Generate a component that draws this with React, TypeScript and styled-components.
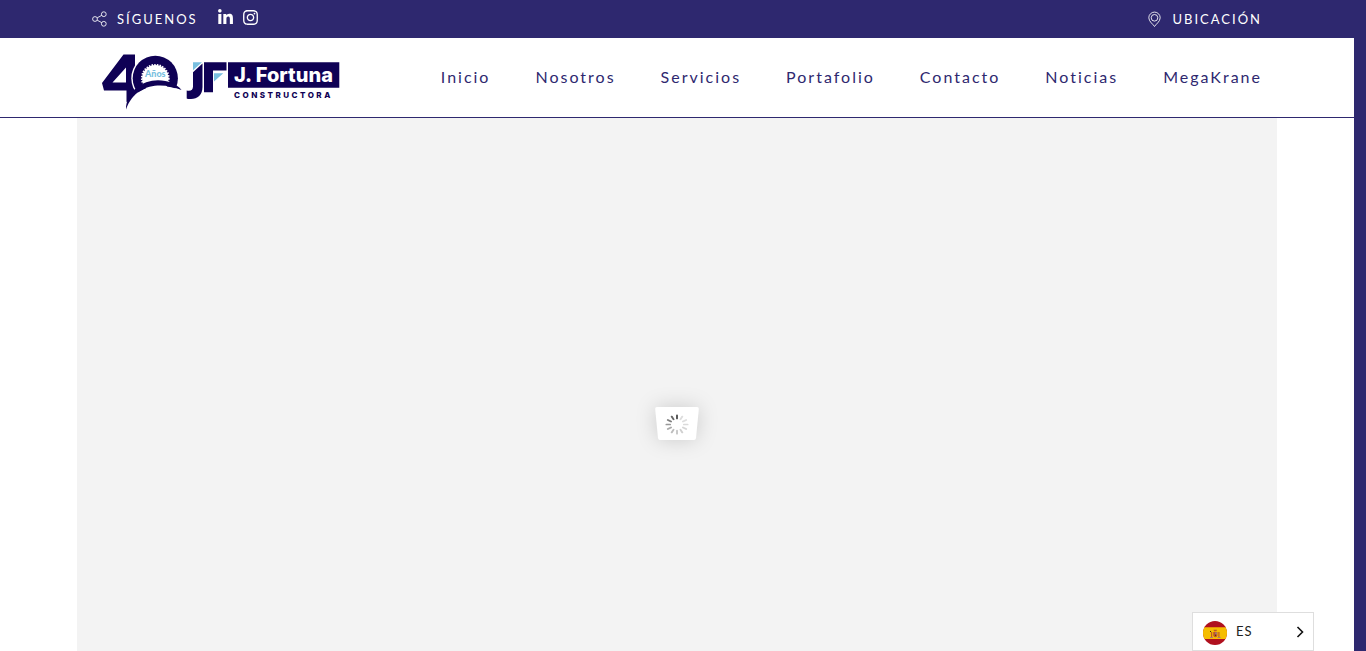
import React from "react";
import styled, { createGlobalStyle, css } from "styled-components";
import { FaLinkedinIn, FaInstagram } from "react-icons/fa";

const navy = "#2e286f";
const ink = "#0f0155";
const sky = "#79bfdf";

const GlobalStyle = createGlobalStyle`
  * { box-sizing: border-box; }
  html { background: ${navy}; }
  body { margin: 0; font-family: Lato, "Liberation Sans", sans-serif; }
`;

const Page = styled.div`
  display: flex;
  flex-direction: column;
  min-height: 100vh;
  margin-right: 12px;
  background: #fff;
`;

const container = css`
  width: 100%;
  max-width: 1200px;
  margin: 0 auto;
`;

const TopBar = styled.div`
  background: ${navy};
`;

const TopInner = styled.div`
  ${container}
  display: flex;
  align-items: center;
  justify-content: space-between;
  height: 38px;
  padding: 0 15px;
`;

const Group = styled.div`
  display: flex;
  align-items: center;
`;

const TopLabel = styled.span`
  display: flex;
  align-items: center;
  gap: 10px;
  color: #fff;
  font-size: 13px;
  line-height: 20px;
  letter-spacing: 2px;
  text-transform: uppercase;
`;

const TopLink = styled(TopLabel).attrs({ as: "a" })<{ href: string }>`
  text-decoration: none;
`;

const Socials = styled.div`
  display: flex;
  gap: 8px;
  margin-left: 19px;
  padding-bottom: 3px;
`;

const SocialLink = styled.a`
  display: flex;
  color: #fff;
`;

const Header = styled.header`
  border-bottom: 1px solid ${navy};
`;

const HeaderInner = styled.div`
  ${container}
  display: flex;
  align-items: center;
  justify-content: space-between;
  height: 79px;
  padding: 0 15px 0 23px;
`;

const LogoLink = styled.a`
  display: flex;
  padding-top: 6px;
`;

const Nav = styled.nav`
  display: flex;
  gap: 45px;
  padding-bottom: 2px;
`;

const NavLink = styled.a`
  color: ${navy};
  font-size: 16px;
  line-height: 24px;
  letter-spacing: 2px;
  text-decoration: none;
`;

const Hero = styled.main`
  ${container}
  display: flex;
  flex: 1;
  align-items: center;
  justify-content: center;
  padding-top: 78px;
  background: #f3f3f3;
`;

const LoaderCard = styled.div`
  display: flex;
  filter: drop-shadow(0 0 10px rgba(0, 0, 0, 0.16));
`;

const Language = styled.button`
  position: fixed;
  right: 52px;
  bottom: 0;
  display: flex;
  align-items: center;
  width: 122px;
  height: 39px;
  padding: 2px 9px 0 10px;
  border: 1px solid #dedede;
  border-radius: 0;
  background: #fff;
  color: #222;
  font-family: inherit;
  font-size: 13px;
  letter-spacing: 1px;
  cursor: pointer;
`;

const LanguageCode = styled.span`
  flex: 1;
  padding: 0 0 3px 9px;
  text-align: left;
`;

const ShareIcon = () => (
  <svg width="15" height="16" viewBox="0 0 15 16" fill="none" stroke="#fff" strokeOpacity="0.85" aria-hidden="true">
    <circle cx="3" cy="8" r="2.4" />
    <circle cx="11.8" cy="3.2" r="2.4" />
    <circle cx="11.8" cy="12.8" r="2.4" />
    <path d="M5.2 6.8 9.7 4.4M5.2 9.2l4.5 2.4" />
  </svg>
);

const PinIcon = () => (
  <svg width="14" height="16" viewBox="0 0 14 16" fill="none" stroke="#fff" strokeOpacity="0.85" aria-hidden="true">
    <path d="M6.500 15.500C5.500 13.500 .8 10.700 .8 6.800a5.700 5.700 0 0 1 11.400 0c0 3.900-4.700 6.700-5.700 8.700Z" />
    <circle cx="6.500" cy="6.800" r="3.300" />
  </svg>
);

const Logo = () => (
  <svg width="240" height="60" viewBox="100 51 240 60" role="img" aria-label="40 Años J. Fortuna Constructora">
    <path fill={ink} fillRule="evenodd" d="M123.500 54.500H135V99l-8.500 3V90.500H104L102 83ZM126 67.500 112.500 82.500H126Z" />
    <circle cx="155.300" cy="78.300" r="24" fill="#fff" />
    <circle cx="155.300" cy="78.300" r="22.600" fill={ink} />
    <circle cx="155.300" cy="78.300" r="13.200" fill="#fff" />
    <circle cx="155.300" cy="78.300" r="13.500" fill="none" stroke="#fff" strokeWidth="1.800" strokeDasharray="1.500 1.200" />
    <path fill="#fff" d="M131 98Q150 79 181 90V111H127V104Z" />
    <path fill={ink} d="M126 109.500C126 92 142 80.300 158 80.300C168 80.300 177 84 181.500 90C162 81.500 135 83 126 109.500Z" />
    <text x="145" y="77" fill={sky} fontFamily="Lato" fontWeight="900" fontSize="9">Años</text>
    <path fill={sky} d="M193 62.300h9L193 70.300ZM214 73.200h9.300l-9.300 8.300Z" />
    <path fill={ink} d="M202.500 63.500V87c0 8-5 12-11.500 12-2 0-4-.4-4.300-.6V90.500c4 1 6.300-.5 6.300-4V72.300ZM204 62.300h22.500V70.500H213V92.300h-9Z" />
    <path fill={ink} d="M228 62.300h111.300v25.400H228Z" />
    <text x="234" y="82" fill="#fff" fontFamily="Inter" fontWeight="800" fontSize="20">J. Fortuna</text>
    <text x="234" y="98" fill={ink} fontFamily="Inter" fontWeight="800" fontSize="8" letterSpacing="2.500">CONSTRUCTORA</text>
  </svg>
);

const spokeColours = ["#555", "#ddd", "#dedede", "#dadada", "#d6d6d6", "#d0d0d0", "#c8c8c8", "#bdbdbd", "#aaa", "#999", "#808080", "#686868"];

const Loader = () => (
  <svg width="44" height="34" viewBox="0 0 44 34" role="img" aria-label="Cargando">
    <path d="M2 0H42q2 0 1.800 2L41 31q-.3 2-2 2H5q-1.700 0-2-2L.2 2Q0 0 2 0Z" fill="#fff" />
    <g transform="translate(22 17.500) scale(1.150 1)">
      {spokeColours.map((colour, i) => (
        <path key={i} d="M0-9.200V-6" stroke={colour} strokeWidth="1.700" strokeLinecap="round" transform={`rotate(${i * 30})`} />
      ))}
    </g>
  </svg>
);

const SpainFlag = () => (
  <svg width="24" height="24" viewBox="0 0 24 24" aria-hidden="true">
    <defs>
      <clipPath id="flag-circle"><circle cx="12" cy="12" r="12" /></clipPath>
    </defs>
    <g clipPath="url(#flag-circle)">
      <path fill="#b0101e" d="M0 0h24v24H0Z" />
      <path fill="#f5bd00" d="M0 6.300h24V18H0Z" />
      <path fill="#b5472c" fillOpacity="0.85" d="M8 11h1.200V17H8ZM15.300 11h1.200V17h-1.200ZM10.200 11h4.200v3.700q-2 3-4.200 0ZM10.500 8.800h3.500l-.5 1.400H11Z" />
      <path fill="#a77a78" d="M12.200 11.300h1.900v2.200h-1.900ZM7 16h3v1H7ZM14.500 16h3v1h-3Z" />
      <path fill="#3b2615" d="M7 10h1v1H7ZM12 13.700h1v1h-1Z" />
    </g>
  </svg>
);

const Chevron = () => (
  <svg width="8" height="14" viewBox="0 0 8 14" fill="none" stroke="#111" strokeWidth="1.600" aria-hidden="true">
    <path d="M1.500 1 6.500 6 1.500 11" />
  </svg>
);

const navItems = ["Inicio", "Nosotros", "Servicios", "Portafolio", "Contacto", "Noticias", "MegaKrane"];

export default function App() {
  return (
    <>
      <GlobalStyle />
      <Page>
        <TopBar>
          <TopInner>
            <Group>
              <TopLabel><ShareIcon />Síguenos</TopLabel>
              <Socials>
                <SocialLink href="#linkedin" aria-label="LinkedIn"><FaLinkedinIn size={17} /></SocialLink>
                <SocialLink href="#instagram" aria-label="Instagram"><FaInstagram size={17} /></SocialLink>
              </Socials>
            </Group>
            <TopLink href="#ubicacion"><PinIcon />Ubicación</TopLink>
          </TopInner>
        </TopBar>
        <Header>
          <HeaderInner>
            <LogoLink href="#inicio"><Logo /></LogoLink>
            <Nav>
              {navItems.map((item) => (
                <NavLink key={item} href={`#${item.toLowerCase()}`}>{item}</NavLink>
              ))}
            </Nav>
          </HeaderInner>
        </Header>
        <Hero>
          <LoaderCard><Loader /></LoaderCard>
        </Hero>
      </Page>
      <Language type="button">
        <SpainFlag />
        <LanguageCode>ES</LanguageCode>
        <Chevron />
      </Language>
    </>
  );
}
